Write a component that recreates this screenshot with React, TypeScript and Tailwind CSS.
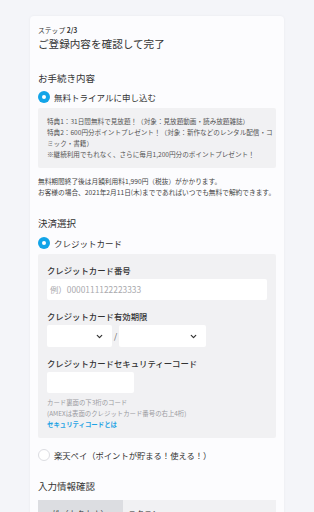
import { ChevronDown } from "lucide-react";

function Radio({ checked }: { checked: boolean }) {
  return checked ? (
    <span className="w-[12px] h-[12px] rounded-full bg-[#12a4e8] flex items-center justify-center flex-shrink-0">
      <span className="w-[4px] h-[4px] rounded-full bg-white" />
    </span>
  ) : (
    <span className="w-[12px] h-[12px] rounded-full bg-white border border-[#dcdde2] flex-shrink-0" />
  );
}

function Select({ width }: { width: string }) {
  return (
    <div className={`${width} h-[22px] bg-white rounded-[2px] flex items-center justify-end pr-[8px]`}>
      <ChevronDown size={9} strokeWidth={3.2} className="text-[#333]" />
    </div>
  );
}

export default function App() {
  return (
    <div className="min-h-[512px] bg-[#f4f5f9] pt-[16px] font-[family-name:'Noto_Sans_CJK_JP',sans-serif] text-[#333]">
      <div className="w-[254px] mx-auto bg-[#fcfcfe] rounded-t-[4px] shadow-[0_0_3px_rgba(0,0,0,0.05)] px-[8px] pt-[9px] pb-[20px]">
        {/* Header */}
        <p className="text-[6.8px] leading-[10px] text-[#333]">
          ステップ <span className="font-bold">2/3</span>
        </p>
        <h1 className="mt-[1px] text-[10.6px] leading-[16px]">ご登録内容を確認して完了</h1>

        {/* お手続き内容 */}
        <h2 className="mt-[19px] text-[9.5px] leading-[14px]">お手続き内容</h2>
        <div className="mt-[5px] flex items-center gap-[4px] h-[14px]">
          <Radio checked />
          <span className="text-[8.5px] leading-[14px]">無料トライアルに申し込む</span>
        </div>
        <div className="mt-[4px] bg-[#f1f1f3] rounded-[2px] px-[9px] pt-[8px] pb-[8px] text-[6.6px] leading-[11px] text-[#555]">
          <p>特典1：31日間無料で見放題！（対象：見放題動画・読み放題雑誌）</p>
          <p className="whitespace-nowrap">
            特典2：600円分ポイントプレゼント！（対象：新作などのレンタル配信・コ
            <br />
            ミック・書籍）
          </p>
          <p>※継続利用でもれなく、さらに毎月1,200円分のポイントプレゼント！</p>
        </div>
        <div className="mt-[8px] text-[6.7px] leading-[11px] text-[#444]">
          <p>無料期間終了後は月額利用料1,990円（税抜）がかかります。</p>
          <p>お客様の場合、2021年2月11日(木)までであればいつでも無料で解約できます。</p>
        </div>

        {/* 決済選択 */}
        <h2 className="mt-[18px] text-[9.5px] leading-[14px]">決済選択</h2>
        <div className="mt-[6px] flex items-center gap-[4px] h-[14px]">
          <Radio checked />
          <span className="text-[8.5px] leading-[14px]">クレジットカード</span>
        </div>
        <div className="mt-[4px] bg-[#f1f1f3] rounded-[2px] px-[9px] pt-[10px] pb-[8px]">
          <p className="text-[8.4px] leading-[12px] font-medium">クレジットカード番号</p>
          <div className="mt-[3px] h-[21px] bg-white rounded-[2px] flex items-center px-[3px]">
            <span className="text-[8.4px] text-[#a9a9ad]">例）0000111122223333</span>
          </div>

          <p className="mt-[10px] text-[8.4px] leading-[12px] font-medium">クレジットカード有効期限</p>
          <div className="mt-[3px] flex items-center gap-[2px]">
            <Select width="w-[65px]" />
            <span className="text-[8px] text-[#555] w-[3px]">/</span>
            <Select width="w-[87px]" />
          </div>

          <p className="mt-[10px] text-[8.4px] leading-[12px] font-medium">クレジットカードセキュリティーコード</p>
          <div className="mt-[3px] h-[21px] w-[87px] bg-white rounded-[2px]" />
          <div className="mt-[4px] text-[6.4px] leading-[11px] text-[#9a9a9f]">
            <p>カード裏面の下3桁のコード</p>
            <p>(AMEXは表面のクレジットカード番号の右上4桁)</p>
            <p className="text-[#1ea2e4] font-bold">セキュリティコードとは</p>
          </div>
        </div>
        <div className="mt-[10px] flex items-center gap-[4px] h-[14px]">
          <Radio checked={false} />
          <span className="text-[8.3px] leading-[14px]">楽天ペイ（ポイントが貯まる！使える！）</span>
        </div>

        {/* 入力情報確認 */}
        <h2 className="mt-[17px] text-[9.5px] leading-[14px]">入力情報確認</h2>
        <div className="mt-[7px] flex text-[8px]">
          <div className="w-[85px] bg-[#dcdde1] py-[8px] text-center">姓（カタカナ）</div>
          <div className="flex-1 bg-[#f1f1f3] py-[8px] px-[5px]">ラクテン</div>
        </div>
      </div>
    </div>
  );
}
